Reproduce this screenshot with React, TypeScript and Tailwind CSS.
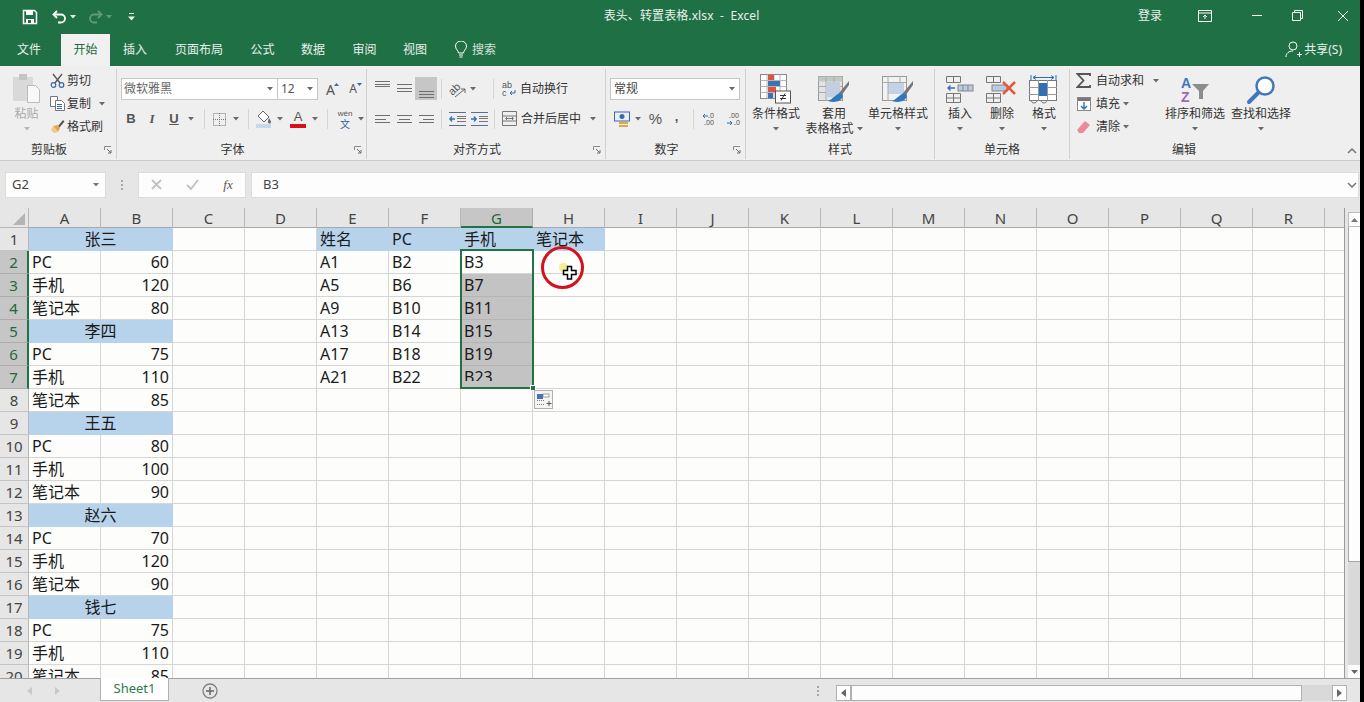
import React from "react";

const cjk = "font-['Noto_Sans','Noto_Sans_CJK_SC',sans-serif]";

function Caret({ c = "#6a6a6a", className = "" }: { c?: string; className?: string }) {
  return (
    <svg width="6" height="4" viewBox="0 0 6 4" className={className}>
      <path d="M0 0h6L3 3.5z" fill={c} />
    </svg>
  );
}

function Launcher() {
  return (
    <svg width="8" height="8" viewBox="0 0 8 8" className="absolute right-[4px] top-[5px]">
      <path d="M.5 4V.5H7" fill="none" stroke="#8a8a8a" />
      <path d="M3 3l4 4M4 7h3V4" fill="none" stroke="#6a6a6a" />
    </svg>
  );
}

function Group({ w, label, children, launcher }: { w: string; label: string; children: React.ReactNode; launcher?: boolean }) {
  return (
    <div className={`${w} shrink-0 flex flex-col`}>
      <div className="h-[75px] relative">{children}</div>
      <div className={`h-[17px] relative flex items-center justify-center text-[12px] text-[#333] ${launcher ? "pr-[18px]" : ""}`}>
        <span>{label}</span>
        {launcher && <Launcher />}
      </div>
    </div>
  );
}

function Sep() {
  return <div className="w-px h-[90px] mt-[3px] bg-[#d0d0d0] shrink-0" />;
}

function BigBtn({ w, icon, lines, caretInline }: { w: string; icon: React.ReactNode; lines: string[]; caretInline?: boolean }) {
  return (
    <div className={`${w} shrink-0 flex flex-col items-center pt-[7px] text-[12px] leading-[15px] text-[#333]`}>
      <div className="h-[33px] flex items-center justify-center">{icon}</div>
      <div className="whitespace-nowrap text-center">{lines[0]}</div>
      {lines[1] ? (
        <div className="whitespace-nowrap flex items-center gap-[3px]">
          {lines[1]}
          {caretInline && <Caret />}
        </div>
      ) : (
        <Caret className="mt-[6px]" />
      )}
    </div>
  );
}

function Lines({ rows, h = 14 }: { rows: [number, number, number][]; h?: number }) {
  return (
    <svg width="15" height={h} viewBox={`0 0 15 ${h}`}>
      {rows.map(([y, a, b], i) => (
        <path key={i} d={`M${a} ${y + 0.5}H${b}`} stroke="#6f6f6f" />
      ))}
    </svg>
  );
}

function Slot({ w, children }: { w: string; children?: React.ReactNode }) {
  return <div className={`${w} shrink-0 h-full flex items-center justify-center`}>{children}</div>;
}

const colNames = "ABCDEFGHIJKLMNOPQRS".split("");

const cells: Record<string, string> = {
  A1: "张三", E1: "姓名", F1: "PC", G1: "手机", H1: "笔记本",
  A2: "PC", B2: "60", A3: "手机", B3: "120", A4: "笔记本", B4: "80",
  A5: "李四", A6: "PC", B6: "75", A7: "手机", B7: "110", A8: "笔记本", B8: "85",
  A9: "王五", A10: "PC", B10: "80", A11: "手机", B11: "100", A12: "笔记本", B12: "90",
  A13: "赵六", A14: "PC", B14: "70", A15: "手机", B15: "120", A16: "笔记本", B16: "90",
  A17: "钱七", A18: "PC", B18: "75", A19: "手机", B19: "110", A20: "笔记本", B20: "85",
  E2: "A1", F2: "B2", G2: "B3", E3: "A5", F3: "B6", G3: "B7", E4: "A9", F4: "B10", G4: "B11",
  E5: "A13", F5: "B14", G5: "B15", E6: "A17", F6: "B18", G6: "B19", E7: "A21", F7: "B22", G7: "B23",
};
const merged = new Set([1, 5, 9, 13, 17]);

function Grid() {
  const rows = Array.from({ length: 20 }, (_, i) => i + 1);
  return (
    <div className="relative h-[470px] w-[1345px] shrink-0 overflow-hidden bg-[#fdfdfb] border-r border-[#9a9a9a] grid grid-cols-[29px_repeat(18,72px)_20px] auto-rows-[23px] grid-rows-[20px]">
      <div className="bg-[#e6e6e6] border-r border-b border-[#b8b8b8] relative">
        <svg width="12" height="12" viewBox="0 0 12 12" className="absolute right-[3px] bottom-[2px]">
          <path d="M12 0V12H0z" fill="#b4b4b4" />
        </svg>
      </div>
      {colNames.map((c) => (
        <div
          key={c}
          className={`flex items-center justify-center text-[15px] leading-none pt-[2px] border-r border-b ${
            c === "G" ? "bg-[#c6c6c6] text-[#20683f] border-r-[#ababab] border-b-2 border-b-[#217346]" : "bg-[#e6e6e6] text-[#444] border-r-[#b8b8b8] border-b-[#a8a8a8]"
          }`}
        >
          {c === "S" ? "" : c}
        </div>
      ))}
      {rows.map((r) => {
        const sel = r >= 2 && r <= 7;
        return (
          <React.Fragment key={r}>
            <div
              className={`flex items-center justify-center text-[15px] leading-none border-b ${
                sel ? "bg-[#c6c6c6] text-[#20683f] border-r-2 border-r-[#217346] border-b-[#ababab]" : "bg-[#e6e6e6] text-[#444] border-r border-r-[#b8b8b8] border-b-[#c4c4c4]"
              }`}
            >
              {r}
            </div>
            {colNames.map((c) => {
              if (c === "B" && merged.has(r)) return null;
              const id = `${c}${r}`;
              const t = cells[id];
              const isMerged = c === "A" && merged.has(r);
              const blue = isMerged || (r === 1 && "EFGH".includes(c));
              const gray = c === "G" && r >= 3 && r <= 7;
              const right = c === "B";
              return (
                <div
                  key={c}
                  className={`border-r border-b overflow-hidden whitespace-nowrap text-[16px] leading-[22px] text-[#1a1a1a] ${
                    isMerged ? "col-span-2 text-center" : right ? "text-right pr-[3px]" : "pl-[3px]"
                  } ${blue ? "bg-[#b7d3ec] border-[#b7d3ec]" : gray ? "bg-[#c3c3c3] border-[#b4b4b4]" : "border-[#d6d6d6]"}`}
                >
                  {id === "G7" ? <span className="block h-[15px] overflow-hidden">{t}</span> : t}
                </div>
              );
            })}
          </React.Fragment>
        );
      })}

      {/* selection */}
      <div className="absolute left-[460px] top-[41px] w-[74px] h-[140px] border-2 border-[#217346] pointer-events-none" />
      <div className="absolute left-[530px] top-[177px] w-[6px] h-[6px] bg-[#217346] border border-white" />
      <div className="absolute left-[534px] top-[182px] w-[19px] h-[19px] bg-[#f4f4f4] border border-[#b0b0b0] flex items-center justify-center">
        <svg width="16" height="14" viewBox="0 0 16 14">
          <rect x="1" y="1" width="6" height="5" fill="#4a6fc0" />
          <rect x="7" y="1" width="6" height="3" fill="#fff" stroke="#777" strokeWidth=".7" />
          <path d="M1 7.5h7M1 11.5h7" stroke="#777" strokeDasharray="1 1" />
          <path d="M10.5 10.5h5M13 8v5" stroke="#555" />
        </svg>
      </div>

      {/* click marker */}
      <div className="absolute left-[541px] top-[38px] w-[43px] h-[43px] rounded-full border-[3px] border-[#d4111e]" />
      <div className="absolute left-[559px] top-[55px] w-[9px] h-[9px] rounded-full bg-[#f6ee8a]" />
      <svg width="16" height="16" viewBox="0 0 16 16" className="absolute left-[562px] top-[57px]">
        <path d="M5.5 1.5h4v4h4.500v4h-4.500v4.500h-4v-4.500h-4v-4h4z" fill="#fff" stroke="#000" strokeWidth="1.500" />
      </svg>
    </div>
  );
}

export default function App() {
  const tabs: [string, string][] = [
    ["文件", "w-[60px] pr-[2px]"], ["开始", "w-[49px]"], ["插入", "w-[50px]"], ["页面布局", "w-[78px]"],
    ["公式", "w-[49px]"], ["数据", "w-[52px]"], ["审阅", "w-[51px]"], ["视图", "w-[50px]"],
  ];
  return (
    <div className="w-[1364px] h-[702px] overflow-hidden flex bg-black">
      <div className={`w-[1360px] h-[702px] shrink-0 flex flex-col bg-[#e6e6e6] ${cjk}`}>
        {/* Title bar */}
        <div className="h-[33px] shrink-0 bg-[#207045] flex items-center text-[12px] text-white/90 relative">
          <div className="w-[400px] flex items-center h-full">
            <Slot w="w-[21px] ml-[19px]">
              <svg width="16" height="16" viewBox="0 0 16 16">
                <path d="M1.500 1.500h11l2 2v11h-13z" fill="none" stroke="#fff" strokeWidth="1.500" />
                <path d="M4 2h7v4H4zM4 10h8v5H4z" fill="#fff" />
                <rect x="6" y="11" width="3" height="3" fill="#207045" />
              </svg>
            </Slot>
            <Slot w="w-[18px] ml-[10px]">
              <svg width="15" height="14" viewBox="0 0 15 14">
                <path d="M5 1L1.500 4.500 5 8" fill="none" stroke="#fff" strokeWidth="1.800" />
                <path d="M2 4.500h7a4 4 0 0 1 0 8H6" fill="none" stroke="#fff" strokeWidth="1.800" />
              </svg>
            </Slot>
            <Slot w="w-[10px]"><Caret c="#e8f0ea" /></Slot>
            <Slot w="w-[18px] ml-[8px]">
              <svg width="15" height="14" viewBox="0 0 15 14">
                <path d="M10 1l3.500 3.500L10 8" fill="none" stroke="#5f9a7b" strokeWidth="1.800" />
                <path d="M13 4.500H6a4 4 0 0 0 0 8h3" fill="none" stroke="#5f9a7b" strokeWidth="1.800" />
              </svg>
            </Slot>
            <Slot w="w-[10px]"><Caret c="#5f9a7b" /></Slot>
            <Slot w="w-[8px] ml-[13px]">
              <svg width="7" height="8" viewBox="0 0 7 8">
                <path d="M1 .5h5" stroke="#e8f0ea" />
                <path d="M0 3.500h7L3.500 7.500z" fill="#e8f0ea" />
              </svg>
            </Slot>
          </div>
          <div className="flex-1 flex justify-center pb-[2px] pl-[3px] text-[12px] tracking-[0.1px] whitespace-pre text-white/90">表头、转置表格.xlsx  -  Excel</div>
          <div className="w-[224px] ml-[176px] h-full flex items-center pb-[2px]">
            <Slot w="w-[28px]">登录</Slot>
            <Slot w="w-[82px]">
              <svg width="14" height="12" viewBox="0 0 14 12">
                <path d="M.5.500h13v11H.500zM.5 3h13" fill="none" stroke="#fff" />
                <path d="M7 9V5M5 7l2-2 2 2" fill="none" stroke="#fff" />
              </svg>
            </Slot>
            <Slot w="w-[22px]"><div className="w-[10px] h-px bg-white" /></Slot>
            <Slot w="w-[58px]">
              <svg width="11" height="11" viewBox="0 0 11 11">
                <path d="M.5 2.500h8v8h-8zM2.500 2.500v-2h8v8h-2" fill="none" stroke="#fff" />
              </svg>
            </Slot>
            <Slot w="w-[34px]">
              <svg width="12" height="12" viewBox="0 0 12 12"><path d="M1 1l10 10M11 1L1 11" stroke="#fff" /></svg>
            </Slot>
          </div>
        </div>

        {/* Tabs */}
        <div className="h-[33px] shrink-0 bg-[#207045] flex text-[12px] text-white/90">
          {tabs.map(([t, w]) =>
            t === "开始" ? (
              <div key={t} className={`${w} shrink-0 ml-px mt-px bg-[#f1f1f1] text-[#20683f] flex items-center justify-center`}>{t}</div>
            ) : (
              <div key={t} className={`${w} shrink-0 flex items-center justify-center`}>{t}</div>
            ),
          )}
          <div className="flex items-center ml-[14px] gap-[4px] text-white/80">
            <svg width="14" height="17" viewBox="0 0 14 17">
              <path d="M4.500 12c0-2.500-3-3.500-3-7a5.500 5 0 0 1 11 0c0 3.500-3 4.500-3 7zM5 14h4M5.500 16h3" fill="none" stroke="#fff" />
            </svg>
            <span>搜索</span>
          </div>
          <div className="flex-1" />
          <div className="flex items-center mr-[18px] gap-[1px]">
            <svg width="18" height="17" viewBox="0 0 18 17">
              <circle cx="8" cy="5" r="4" fill="none" stroke="#fff" />
              <path d="M1 16c0-4 3-6 7-6M12 13.500h5M14.500 11v5" fill="none" stroke="#fff" />
            </svg>
            <span>共享(S)</span>
          </div>
        </div>

        {/* Ribbon */}
        <div className="h-[95px] shrink-0 bg-[#efefef] flex border-b border-[#c9c9c9]">
          <Group w="w-[116px]" label="剪贴板" launcher>
            <div className="flex h-full">
              <div className="w-[35px] ml-[9px] flex flex-col items-center pt-[7px] text-[12px] text-[#aaa]">
                <svg width="30" height="30" viewBox="0 0 30 30">
                  <rect x="1" y="4" width="20" height="24" fill="#d9d9d9" />
                  <rect x="7" y="1" width="8" height="6" fill="#c4c4c4" />
                  <path d="M15.500 12.500h8l4 4v13h-12z" fill="#f8f8f8" stroke="#bbb" />
                </svg>
                <span className="mt-[3px] leading-[16px]">粘贴</span>
                <Caret c="#b5b5b5" className="mt-[5px]" />
              </div>
              <div className="ml-[5px] flex flex-col pt-[3px] text-[12px] text-[#333]">
                {[
                  ["剪切", <svg key="a" width="15" height="15" viewBox="0 0 15 15"><path d="M3 1l7 9M12 1L5 10" stroke="#555" strokeWidth="1.300" /><circle cx="3.500" cy="12" r="2.300" fill="none" stroke="#3a68a8" strokeWidth="1.200" /><circle cx="11.500" cy="12" r="2.300" fill="none" stroke="#3a68a8" strokeWidth="1.200" /></svg>],
                  ["复制", <svg key="b" width="15" height="15" viewBox="0 0 15 15"><path d="M.5.500h7v10h-7z" fill="#fff" stroke="#777" /><path d="M5.500 4.500h6l3 3v7h-9z" fill="#fff" stroke="#777" /><path d="M7 8.500h5M7 10.500h5M7 12.500h5" stroke="#3a68a8" /></svg>],
                  ["格式刷", <svg key="c" width="15" height="15" viewBox="0 0 15 15"><path d="M8 7l5-6 1.500 1.500-5 6z" fill="#555" /><path d="M3 7l5-1 2 3-2 4z" fill="#e0a845" /><path d="M3 7l5 6-4 1-3-3z" fill="#eccb87" /></svg>],
                ].map(([t, ic], i) => (
                  <div key={i} className="h-[23px] flex items-center">
                    <div className="w-[17px] flex justify-center">{ic}</div>
                    <span className="ml-px">{t as string}</span>
                    {i === 1 && <Caret className="ml-[8px]" />}
                  </div>
                ))}
              </div>
            </div>
          </Group>
          <Sep />
          <Group w="w-[249px]" label="字体" launcher>
            <div className="flex flex-col pl-[4px]">
              <div className="mt-[12px] h-[22px] flex items-center">
                <div className="w-[157px] h-full bg-white border border-[#c6c6c6] flex items-center justify-between pl-[2px] pr-[4px] text-[12px] text-[#666]">
                  <span>微软雅黑</span><Caret />
                </div>
                <div className="w-[40px] h-full bg-white border border-l-0 border-[#c6c6c6] flex items-center justify-between pl-[3px] pr-[4px] text-[12px] text-[#555]">
                  <span>12</span><Caret />
                </div>
                <Slot w="w-[23px] ml-[1px]">
                  <span className="relative text-[14px] text-[#555]">A<svg width="5" height="3" viewBox="0 0 5 3" className="absolute -right-[4px] top-[4px]"><path d="M0 3h5L2.500 0z" fill="#3a68a8" /></svg></span>
                </Slot>
                <Slot w="w-[22px]">
                  <span className="relative text-[12px] text-[#555]">A<svg width="5" height="3" viewBox="0 0 5 3" className="absolute -right-[5px] top-[3px]"><path d="M0 0h5L2.500 3z" fill="#3a68a8" /></svg></span>
                </Slot>
              </div>
              <div className="mt-[8px] h-[22px] flex items-center text-[#555]">
                <Slot w="w-[20px]"><span className="text-[13px] font-bold font-['Liberation_Sans']">B</span></Slot>
                <Slot w="w-[22px]"><span className="text-[13px] italic font-bold font-['Liberation_Serif']">I</span></Slot>
                <Slot w="w-[22px]"><span className="text-[13px] font-bold underline font-['Liberation_Sans']">U</span></Slot>
                <Slot w="w-[12px]"><Caret /></Slot>
                <div className="w-px h-[20px] bg-[#d6d6d6] ml-[7px] mr-[3px]" />
                <Slot w="w-[22px]">
                  <svg width="13" height="13" viewBox="0 0 13 13"><path d="M.5.500h12v12H.500zM6.500 0v13M0 6.500h13" fill="none" stroke="#777" strokeDasharray="1 1" /></svg>
                </Slot>
                <Slot w="w-[12px]"><Caret /></Slot>
                <div className="w-px h-[20px] bg-[#d6d6d6] ml-[6px] mr-[4px]" />
                <Slot w="w-[22px]">
                  <svg width="18" height="18" viewBox="0 0 18 18"><path d="M8 1l6 6-5 5-6-6z" fill="#fff" stroke="#666" /><path d="M14 8c1 2 2 3 2 4a1.500 1.500 0 0 1-3 0c0-1 .5-2 1-4z" fill="#666" /><rect x="1" y="14" width="15" height="4" fill="#c5d9ee" /></svg>
                </Slot>
                <Slot w="w-[10px]"><Caret /></Slot>
                <Slot w="w-[24px] ml-[1px]">
                  <div className="flex flex-col items-center leading-none">
                    <span className="text-[13px] font-['Liberation_Sans'] h-[12px] leading-[12px]">A</span>
                    <div className="w-[16px] h-[4px] bg-[#d81018] mt-[1px]" />
                  </div>
                </Slot>
                <Slot w="w-[10px]"><Caret /></Slot>
                <div className="w-px h-[20px] bg-[#d6d6d6] ml-[7px] mr-[6px]" />
                <Slot w="w-[22px]">
                  <div className="flex flex-col items-center leading-none">
                    <span className="text-[8px] h-[9px] leading-[9px] font-['Liberation_Sans']">wén</span>
                    <span className="text-[10px] text-[#2f5f9e] leading-[10px] mt-[1px]">文</span>
                  </div>
                </Slot>
                <Slot w="w-[9px]"><Caret /></Slot>
              </div>
            </div>
          </Group>
          <Sep />
          <Group w="w-[238px]" label="对齐方式" launcher>
            <div className="flex flex-col pl-[4px]">
              <div className="mt-[11px] h-[23px] flex items-center">
                <Slot w="w-[22px]"><Lines h={20} rows={[[2, 0, 15], [5, 0, 15], [7, 0, 15]]} /></Slot>
                <Slot w="w-[22px]"><Lines h={20} rows={[[5, 0, 15], [9, 0, 15], [12, 0, 15]]} /></Slot>
                <div className="w-[22px] h-[23px] shrink-0 bg-[#c6c6c6] flex items-center justify-center">
                  <Lines h={20} rows={[[12, 0, 15], [15, 0, 15], [18, 0, 15]]} />
                </div>
                <div className="w-px h-[20px] bg-[#d6d6d6] mx-[4px]" />
                <Slot w="w-[22px]">
                  <svg width="21" height="20" viewBox="0 0 21 20">
                    <text x="1" y="14" fontSize="11" fill="#555" fontFamily="Liberation Sans" transform="rotate(-45 7 10)">ab</text>
                    <path d="M8 18l10-8M14 10h4v4" fill="none" stroke="#666" />
                  </svg>
                </Slot>
                <Slot w="w-[10px]"><Caret /></Slot>
                <div className="w-px h-[20px] bg-[#d6d6d6] ml-[15px] mr-[8px]" />
                <div className="flex items-center text-[12px] text-[#333]">
                  <svg width="14" height="18" viewBox="0 0 14 18" className="mr-[4px]">
                    <text x="0" y="8" fontSize="9" fill="#555" fontFamily="Liberation Sans">ab</text>
                    <text x="0" y="16" fontSize="9" fill="#555" fontFamily="Liberation Sans">c</text>
                    <path d="M13 10v3H8M10 11l-2 2 2 2" fill="none" stroke="#3a68a8" />
                  </svg>
                  自动换行
                </div>
              </div>
              <div className="mt-[7px] h-[23px] flex items-center">
                <Slot w="w-[22px]"><Lines rows={[[3, 0, 15], [7, 0, 11], [10, 0, 15]]} /></Slot>
                <Slot w="w-[22px]"><Lines rows={[[3, 0, 15], [7, 2, 13], [10, 0, 15]]} /></Slot>
                <Slot w="w-[22px]"><Lines rows={[[3, 0, 15], [7, 4, 15], [10, 0, 15]]} /></Slot>
                <div className="w-px h-[20px] bg-[#d6d6d6] mx-[4px]" />
                <Slot w="w-[22px]">
                  <svg width="17" height="14" viewBox="0 0 17 14"><path d="M0 .5h17M0 13.500h17" stroke="#5a6aa5" /><path d="M8 4.500h9M8 6.500h9M8 9.500h9" stroke="#777" /><path d="M6 7H1M3 4.500L.8 7 3 9.500" fill="none" stroke="#2f6fb5" strokeWidth="1.300" /></svg>
                </Slot>
                <Slot w="w-[22px]">
                  <svg width="17" height="14" viewBox="0 0 17 14"><path d="M0 .5h17M0 13.500h17" stroke="#5a6aa5" /><path d="M8 4.500h9M8 6.500h9M8 9.500h9" stroke="#777" /><path d="M0 7h5M3 4.500L5.200 7 3 9.500" fill="none" stroke="#2f6fb5" strokeWidth="1.300" /></svg>
                </Slot>
                <div className="w-px h-[20px] bg-[#d6d6d6] ml-[4px] mr-[7px]" />
                <div className="flex items-center text-[12px] text-[#333]">
                  <svg width="15" height="15" viewBox="0 0 15 15" className="mr-[4px]"><path d="M.5.500h14v14H.500zM.5 5h14M.5 10h14" fill="none" stroke="#777" /><path d="M4 7.500h7M5 6L3.500 7.500 5 9M10 6l1.500 1.500L10 9" fill="none" stroke="#777" /></svg>
                  合并后居中
                  <Caret className="ml-[9px]" />
                </div>
              </div>
            </div>
          </Group>
          <Sep />
          <Group w="w-[139px]" label="数字" launcher>
            <div className="flex flex-col pl-[4px]">
              <div className="mt-[12px] w-[130px] h-[22px] bg-white border border-[#c6c6c6] flex items-center justify-between pl-[3px] pr-[4px] text-[12px] text-[#444]">
                <span>常规</span><Caret />
              </div>
              <div className="mt-[8px] h-[22px] flex items-center text-[#555]">
                <Slot w="w-[20px] ml-[2px]">
                  <svg width="17" height="17" viewBox="0 0 17 17"><rect x=".5" y="1" width="15" height="9" fill="#e9f0f8" stroke="#3a68a8" /><circle cx="8" cy="5.500" r="2.500" fill="#3a68a8" /><path d="M5 12h9M5 15h9" stroke="#e0a845" strokeWidth="2" /></svg>
                </Slot>
                <Slot w="w-[10px] ml-[1px]"><Caret /></Slot>
                <Slot w="w-[23px] ml-[1px]"><span className="text-[15px] font-['Liberation_Sans']">%</span></Slot>
                <Slot w="w-[19px]"><span className="text-[13px] font-bold font-['Liberation_Sans'] -mt-[4px]">,</span></Slot>
                <div className="w-px h-[20px] bg-[#d6d6d6] ml-[7px] mr-[6px]" />
                <Slot w="w-[22px]">
                  <svg width="18" height="14" viewBox="0 0 18 14"><text x="6" y="6" fontSize="7" fill="#555">.0</text><text x="2" y="13" fontSize="7" fill="#555">.00</text><path d="M6 4H1M3 2L1 4l2 2" fill="none" stroke="#2f6fb5" /></svg>
                </Slot>
                <Slot w="w-[22px] ml-px">
                  <svg width="18" height="14" viewBox="0 0 18 14"><text x="4" y="6" fontSize="7" fill="#555">.00</text><text x="9" y="13" fontSize="7" fill="#555">.0</text><path d="M2 11h5M5 9l2 2-2 2" fill="none" stroke="#2f6fb5" /></svg>
                </Slot>
              </div>
            </div>
          </Group>
          <Sep />
          <Group w="w-[188px]" label="样式">
            <div className="flex h-full">
              <BigBtn w="w-[60px]" lines={["条件格式"]} icon={
                <svg width="32" height="31" viewBox="0 0 32 31">
                  <rect x=".5" y=".5" width="26" height="24" fill="#fff" stroke="#888" />
                  <path d="M7 .5v24M14 .5v24M20 .5v24M.5 6.500h26M.5 12.500h26M.5 18.500h26" stroke="#b5b5b5" />
                  <rect x="8" y="1" width="6" height="5" fill="#e0533c" /><rect x="8" y="7" width="12" height="5" fill="#3a74b8" /><rect x="8" y="13" width="8" height="5" fill="#e0533c" /><rect x="8" y="19" width="5" height="5" fill="#3a74b8" />
                  <rect x="15.500" y="17" width="15" height="12" fill="#fff" stroke="#555" />
                  <path d="M20 21.500h6M20 24.500h6M25 19.500l-4 7" stroke="#333" />
                </svg>} />
              <BigBtn w="w-[56px]" lines={["套用", "表格格式"]} caretInline icon={
                <svg width="32" height="31" viewBox="0 0 32 31">
                  <rect x=".5" y="2.500" width="24" height="24" fill="#e3e3e3" stroke="#999" />
                  <rect x=".5" y="2.500" width="24" height="5" fill="#bfcabf" />
                  <path d="M8 2v25M16 2v25M0 12.500h24M0 18.500h24" stroke="#aaa" />
                  <rect x="8" y="8" width="14" height="15" fill="#c3cfe0" />
                  <path d="M31 7l-10 12 2 3 8-11z" fill="#777" />
                  <path d="M22 19c-5 2-7 6-12 8 6 2 13 1 15-5z" fill="#2f78be" />
                </svg>} />
              <BigBtn w="w-[72px]" lines={["单元格样式"]} icon={
                <svg width="32" height="31" viewBox="0 0 32 31">
                  <rect x=".5" y="2.500" width="24" height="24" fill="#f2f2f2" stroke="#999" />
                  <rect x="6" y="8" width="16" height="12" fill="#c3d3e6" />
                  <path d="M6 2v25M18 2v7M0 8.500h24" stroke="#aaa" />
                  <path d="M31 7l-10 12 2 3 8-11z" fill="#777" />
                  <path d="M22 19c-5 2-7 6-12 8 6 2 13 1 15-5z" fill="#2f78be" />
                </svg>} />
            </div>
          </Group>
          <Sep />
          <Group w="w-[134px]" label="单元格">
            <div className="flex h-full pl-[4px]">
              <BigBtn w="w-[42px]" lines={["插入"]} icon={
                <svg width="28" height="27" viewBox="0 0 28 27">
                  <path d="M.5.500h14v6H.500zM7.500.500v6M.5 17.500h14v9H.500zM.5 22h14M7.500 17.500v9" fill="none" stroke="#777" />
                  <rect x="12" y="9" width="15" height="6" fill="#b7cce4" stroke="#888" /><path d="M17 9v6M22 9v6" stroke="#888" />
                  <path d="M9 12H2M4.500 9.500L2 12l2.500 2.500" fill="none" stroke="#2f6fb5" strokeWidth="1.300" />
                </svg>} />
              <BigBtn w="w-[42px]" lines={["删除"]} icon={
                <svg width="32" height="27" viewBox="0 0 32 27">
                  <path d="M.5.500h14v6H.500zM7.500.500v6M.5 17.500h14v9H.500zM.5 22h14M7.500 17.500v9" fill="none" stroke="#777" />
                  <rect x="6" y="9" width="15" height="6" fill="#b7cce4" stroke="#888" />
                  <path d="M17 6l12 12M29 6L17 18" stroke="#e25b3c" strokeWidth="2.500" />
                </svg>} />
              <BigBtn w="w-[42px]" lines={["格式"]} icon={
                <svg width="30" height="31" viewBox="0 0 30 31">
                  <path d="M2 1v5M27 1v5M4 3.500h21M4 3.500l3-2M4 3.500l3 2M25 3.500l-3-2M25 3.500l-3 2" fill="none" stroke="#2f6fb5" />
                  <rect x=".5" y="6.500" width="27" height="20" fill="#fff" stroke="#777" />
                  <path d="M9.500 6v21M18.500 6v21M0 13.500h28M0 20.500h28" stroke="#999" />
                  <rect x="10" y="9" width="8" height="13" fill="#2f6fb5" />
                  <path d="M2 26c0 4 6 4 6 0M12 26c0 4 6 4 6 0" fill="none" stroke="#777" />
                </svg>} />
            </div>
          </Group>
          <Sep />
          <Group w="w-[228px]" label="编辑">
            <div className="flex h-full">
              <div className="flex flex-col pt-[3px] pl-[6px] w-[92px] text-[12px] text-[#333]">
                {[
                  ["自动求和", <svg key="a" width="15" height="15" viewBox="0 0 15 15"><path d="M14 3V1H1.500l6 6.500L1.500 14H14v-2" fill="none" stroke="#555" strokeWidth="1.800" /></svg>],
                  ["填充", <svg key="b" width="14" height="14" viewBox="0 0 14 14"><rect x=".5" y=".5" width="13" height="13" fill="#fff" stroke="#888" /><rect x="1" y="1" width="12" height="3" fill="#777" /><path d="M7 5v7M4 9l3 3 3-3" fill="none" stroke="#2f6fb5" strokeWidth="1.400" /></svg>],
                  ["清除", <svg key="c" width="15" height="14" viewBox="0 0 15 14"><path d="M9 1l5 4-7 8H3L1 10z" fill="#ea8a9a" /></svg>],
                ].map(([t, ic], i) => (
                  <div key={i} className="h-[23px] flex items-center">
                    <div className="w-[15px] flex justify-center">{ic}</div>
                    <span className="ml-[5px]">{t as string}</span>
                    {i === 0 ? <Caret className="ml-[9px]" /> : <Caret className="ml-[3px]" />}
                  </div>
                ))}
              </div>
              <BigBtn w="w-[66px]" lines={["排序和筛选"]} icon={
                <svg width="32" height="29" viewBox="0 0 32 29">
                  <text x="2" y="13" fontSize="14" fontWeight="bold" fill="#3f78bd" fontFamily="Liberation Sans">A</text>
                  <text x="2" y="27" fontSize="14" fontWeight="bold" fill="#9b6bb0" fontFamily="Liberation Sans">Z</text>
                  <path d="M13 9h17l-6 7v8h-4v-8z" fill="#8d8d8d" />
                </svg>} />
              <BigBtn w="w-[66px]" lines={["查找和选择"]} icon={
                <svg width="30" height="30" viewBox="0 0 30 30">
                  <circle cx="19" cy="11" r="8.500" fill="#fff" stroke="#3f78bd" strokeWidth="2.500" />
                  <path d="M12.500 17.500L3 27" stroke="#3f78bd" strokeWidth="4" strokeLinecap="round" />
                </svg>} />
            </div>
          </Group>
          <div className="flex-1 relative">
            <svg width="10" height="6" viewBox="0 0 10 6" className="absolute right-[3px] bottom-[6px]">
              <path d="M1 5l4-4 4 4" fill="none" stroke="#777" strokeWidth="1.500" />
            </svg>
          </div>
        </div>

        {/* Formula bar */}
        <div className="h-[47px] shrink-0 bg-[#e6e6e6] flex items-center text-[13px]">
          <div className="ml-[5px] w-[101px] h-[26px] bg-[#fdfdfd] border border-[#dcdcdc] flex items-center justify-between pl-[6px] pr-[6px] text-[#444]">
            <span>G2</span><Caret c="#777" />
          </div>
          <div className="w-[32px] flex flex-col items-center gap-[2px]">
            {[0, 1, 2].map((i) => <div key={i} className="w-[2px] h-[2px] bg-[#a8a8a8]" />)}
          </div>
          <div className="w-[108px] h-[26px] bg-[#fdfdfd] border border-[#dcdcdc] flex items-center text-[#aaa]">
            <Slot w="w-[34px]"><svg width="11" height="11" viewBox="0 0 11 11"><path d="M1 1l9 9M10 1l-9 9" stroke="#c0c0c0" strokeWidth="1.800" /></svg></Slot>
            <Slot w="w-[38px]"><svg width="13" height="11" viewBox="0 0 13 11"><path d="M1 6l4 4 7-9" fill="none" stroke="#c0c0c0" strokeWidth="1.800" /></svg></Slot>
            <Slot w="w-[34px]"><span className="text-[#555] text-[13px] italic font-['Liberation_Serif']">fx</span></Slot>
          </div>
          <div className="ml-[5px] w-[1108px] h-[26px] bg-[#fdfdfd] border border-[#dcdcdc] flex items-center justify-between pl-[11px] pr-[1px] text-[#444]">
            <span>B3</span>
            <svg width="10" height="6" viewBox="0 0 10 6"><path d="M1 1l4 4 4-4" fill="none" stroke="#777" strokeWidth="1.500" /></svg>
          </div>
        </div>

        {/* Sheet area */}
        <div className="h-[470px] shrink-0 flex">
          <Grid />
          <div className="flex-1 flex flex-col items-end pt-[4px] bg-[#e6e6e6]">
            <div className="w-[12px] h-[15px] bg-[#fdfdfd] border border-r-0 border-[#bdbdbd] flex items-center justify-center">
              <svg width="7" height="4" viewBox="0 0 7 4"><path d="M0 4h7L3.500 0z" fill="#777" /></svg>
            </div>
            <div className="w-[12px] h-[335px] bg-[#fdfdfd] border-l border-b border-[#a8a8a8]" />
            <div className="w-[12px] flex-1 bg-[#d9d9d9]" />
            <div className="w-[12px] h-[13px] bg-[#fdfdfd] flex items-center justify-center">
              <svg width="7" height="4" viewBox="0 0 7 4"><path d="M0 0h7L3.500 4z" fill="#666" /></svg>
            </div>
          </div>
        </div>

        {/* Sheet tabs */}
        <div className="h-[24px] shrink-0 bg-[#e6e6e6] border-t border-[#a0a0a0] flex text-[13px]">
          <Slot w="w-[28px] ml-[15px]"><svg width="5" height="8" viewBox="0 0 5 8"><path d="M5 0v8L0 4z" fill="#c8c8c8" /></svg></Slot>
          <Slot w="w-[28px]"><svg width="5" height="8" viewBox="0 0 5 8"><path d="M0 0v8l5-4z" fill="#c8c8c8" /></svg></Slot>
          <div className="w-[69px] ml-[29px] -mt-px h-[23px] bg-white border-x border-b border-[#b0b0b0] flex items-center justify-center text-[#2f7a52]">Sheet1</div>
          <Slot w="w-[16px] ml-[33px]">
            <svg width="16" height="16" viewBox="0 0 16 16"><circle cx="8" cy="8" r="7" fill="none" stroke="#808080" strokeWidth="1.300" /><path d="M8 4v8M4 8h8" stroke="#666" strokeWidth="1.500" /></svg>
          </Slot>
          <div className="ml-[595px] w-[10px] flex flex-col items-center justify-center gap-[2px]">
            {[0, 1, 2].map((i) => <div key={i} className="w-[2px] h-[2px] bg-[#a8a8a8]" />)}
          </div>
          <div className="ml-[13px] mt-[6px] w-[511px] h-[16px] flex">
            <div className="w-[15px] h-full bg-[#fdfdfd] border border-[#b0b0b0] flex items-center justify-center">
              <svg width="5" height="8" viewBox="0 0 5 8"><path d="M5 0v8L0 4z" fill="#666" /></svg>
            </div>
            <div className="w-[451px] h-full bg-[#fdfdfd] border border-[#b0b0b0]" />
            <div className="flex-1 bg-[#d9d9d9]" />
            <div className="w-[15px] h-full bg-[#fdfdfd] border border-[#b0b0b0] flex items-center justify-center">
              <svg width="5" height="8" viewBox="0 0 5 8"><path d="M0 0v8l5-4z" fill="#666" /></svg>
            </div>
          </div>
        </div>
      </div>
    </div>
  );
}
